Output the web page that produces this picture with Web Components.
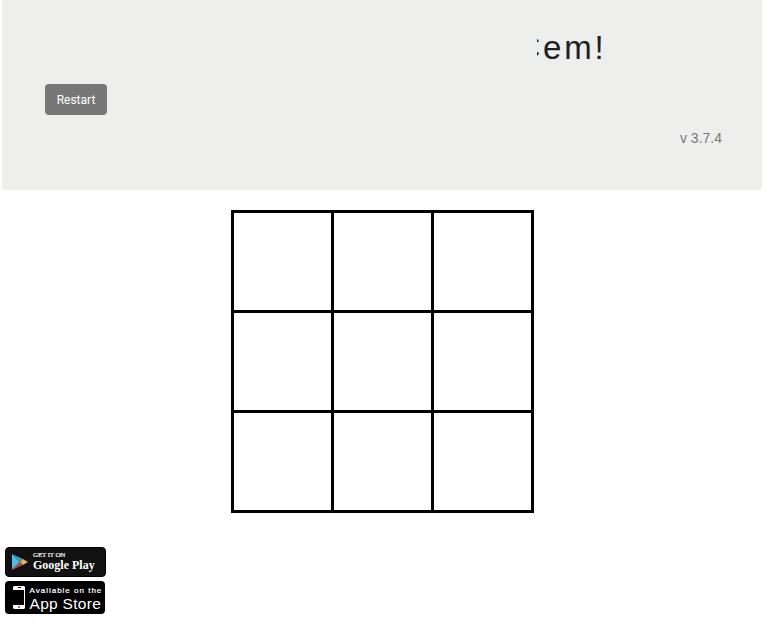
<!DOCTYPE html>
<html lang="en"><head><meta charset="utf-8"><title>Tic Tac Toe</title>
<style>
body{margin:0;background:#fff;font-family:"Liberation Sans",Arial,sans-serif}
</style></head><body>
<game-page></game-page>
<script>
const define=(name,html)=>customElements.define(name,class extends HTMLElement{
  constructor(){super();this.attachShadow({mode:'open'}).innerHTML=html;}
});
define('marquee-title',`<style>
:host{display:flex;justify-content:flex-end;width:69.5px;height:44px;overflow:hidden;font-size:33px;line-height:43px;letter-spacing:2.8px;color:#1c2222;white-space:nowrap}
</style><span><slot></slot></span>`);
define('restart-button',`<style>
:host{display:block;width:62px;height:31px}
button{display:block;width:100%;height:100%;border:0;padding:1px 0 0;border-radius:4px;background:#777;color:#fff;font:12px/30px Roboto,sans-serif}
</style><button><slot></slot></button>`);
define('game-header',`<style>
:host{display:block;box-sizing:border-box;width:760px;height:190px;margin-left:2px;padding:26px 40px 0 43px;border-radius:0 0 4px 4px;background:#eeeeec}
.title{height:58px;padding-left:492px}
.version{height:18px;margin-top:14px;text-align:right;font-size:14px;line-height:18px;color:#777}
</style><div class="title"><slot name="title"></slot></div><slot name="action"></slot><div class="version"><slot></slot></div>`);
define('game-board',`<style>
:host{display:grid;box-sizing:border-box;width:303px;height:303px;margin:20px 0 0 231px;grid-template:repeat(3,97px)/repeat(3,97px);gap:3px;padding:3px;background:#000}
i{background:#fff}
</style>${'<i></i>'.repeat(9)}`);
define('google-badge',`<style>
:host{display:flex;box-sizing:border-box;width:101px;height:30px;border:1px solid #000;border-radius:4px;background:#111;color:#fff;font-family:"Liberation Serif",serif}
svg{width:18px;height:20px;margin:4px 0 0 5px}
.t{margin:3px 0 0 4px;white-space:nowrap}
small{display:block;font-size:7px;line-height:8px;letter-spacing:-.15px;-webkit-text-stroke:.2px}
b{display:block;font-size:12px;line-height:13px}
</style><svg viewBox="0 0 18 20"><path d="M1 18L1 15L9 10L12 13Z" fill="#a84c4a"/><path d="M1 2L9 10L1 17Z" fill="#4dbce9"/><path d="M1 2L12 7L9 10Z" fill="#409ca8"/><path d="M9 10L12 7L17 10L12 13Z" fill="#e6ae62"/></svg><div class="t"><small>GET IT ON</small><b>Google Play</b></div>`);
define('apple-badge',`<style>
:host{display:flex;box-sizing:border-box;width:100px;height:33px;border-radius:4px;background:#000;color:#fff}
svg{width:12px;height:23px;margin:5px 0 0 8px}
.t{margin:5px 0 0 4.5px;white-space:nowrap}
small{display:block;font-size:8px;line-height:10px;letter-spacing:1px;-webkit-text-stroke:.2px}
span{display:block;font-size:15.5px;line-height:16px;letter-spacing:.3px}
</style><svg viewBox="0 0 12 23"><path fill="#fff" fill-rule="evenodd" d="M1 0H11L12 1V22L11 23H1L0 22V19H11V4H0V1Z"/><path d="M5 1.5H8M5 21H7" stroke="#000"/></svg><div class="t"><small>Available on the</small><span>App Store</span></div>`);
define('store-links',`<style>
:host{display:flex;flex-direction:column;gap:4px;margin:34px 0 0 5px}
</style><google-badge></google-badge><apple-badge></apple-badge>`);
define('game-page',`<style>:host{display:flow-root;height:635px;overflow:hidden}</style>
<game-header><marquee-title slot="title">Cem!</marquee-title><restart-button slot="action">Restart</restart-button>v 3.7.4</game-header>
<game-board></game-board><store-links></store-links>`);
</script></body></html>
